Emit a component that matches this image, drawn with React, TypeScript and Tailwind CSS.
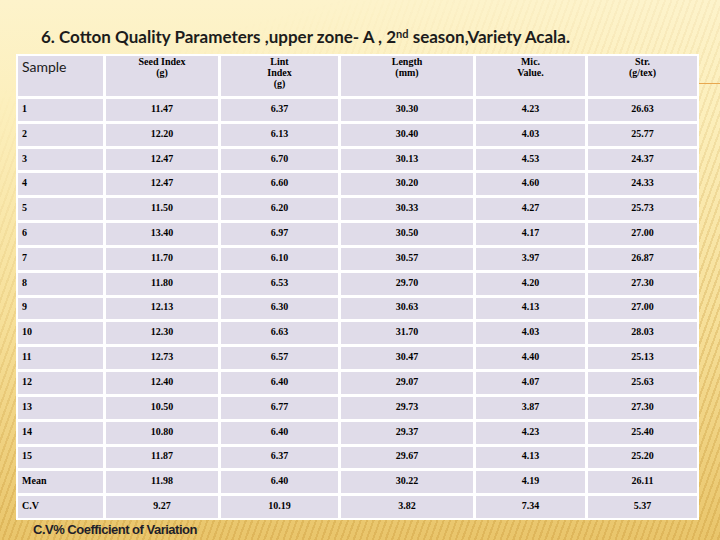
import React from 'react';

type Row = [string, string, string, string, string, string];

const rows: Row[] = [
  ['1', '11.47', '6.37', '30.30', '4.23', '26.63'],
  ['2', '12.20', '6.13', '30.40', '4.03', '25.77'],
  ['3', '12.47', '6.70', '30.13', '4.53', '24.37'],
  ['4', '12.47', '6.60', '30.20', '4.60', '24.33'],
  ['5', '11.50', '6.20', '30.33', '4.27', '25.73'],
  ['6', '13.40', '6.97', '30.50', '4.17', '27.00'],
  ['7', '11.70', '6.10', '30.57', '3.97', '26.87'],
  ['8', '11.80', '6.53', '29.70', '4.20', '27.30'],
  ['9', '12.13', '6.30', '30.63', '4.13', '27.00'],
  ['10', '12.30', '6.63', '31.70', '4.03', '28.03'],
  ['11', '12.73', '6.57', '30.47', '4.40', '25.13'],
  ['12', '12.40', '6.40', '29.07', '4.07', '25.63'],
  ['13', '10.50', '6.77', '29.73', '3.87', '27.30'],
  ['14', '10.80', '6.40', '29.37', '4.23', '25.40'],
  ['15', '11.87', '6.37', '29.67', '4.13', '25.20'],
  ['Mean', '11.98', '6.40', '30.22', '4.19', '26.11'],
  ['C.V', '9.27', '10.19', '3.82', '7.34', '5.37'],
];

const headers: string[][] = [
  ['Seed Index', '(g)'],
  ['Lint', 'Index', '(g)'],
  ['Length', '(mm)'],
  ['Mic.', 'Value.'],
  ['Str.', '(g/tex)'],
];

const serif = "font-['Liberation_Serif',serif]";

function HeaderCell({ lines }: { lines: string[] }) {
  return (
    <div className={`bg-[#e0dce9] text-center text-[10px] leading-[11px] font-bold text-black ${serif}`}>
      {lines.map((l) => (
        <div key={l}>{l}</div>
      ))}
    </div>
  );
}

export default function App() {
  return (
    <div className="relative w-[720px] h-[540px] overflow-hidden bg-[linear-gradient(180deg,#fdf3cb_0%,#fcefbc_20%,#f6df98_60%,#e9c56b_100%)]">
      {/* diagonal stripes */}
      <div className="absolute inset-0 bg-[repeating-linear-gradient(110deg,rgba(185,130,30,0.22)_0px,rgba(185,130,30,0.22)_2px,transparent_2px,transparent_6px)] [mask-image:linear-gradient(165deg,transparent_12%,black_70%)]" />
      <div className="absolute left-[699px] top-[83px] w-[21px] h-px bg-[#e8a850]" />

      <div className="relative">
        <h1 className="pl-[41px] pt-[26px] h-[54px] text-[17px] leading-[22px] font-bold text-[#1c1c1c] font-['Lato','Open_Sans',sans-serif]">
          6. Cotton Quality Parameters ,upper zone- A , 2<sup className="text-[11px]">nd</sup> season,Variety Acala.
        </h1>

        <div className="ml-[16px] w-[683px] h-[466px] bg-white p-[2px] grid gap-[3px] grid-cols-[85px_112px_117px_132px_109px_109px] grid-rows-[40px_repeat(17,1fr)]">
          <div className="bg-[#e0dce9] pl-[4px] pt-[2px] text-[14px] leading-[18px] text-[#1a1a1a] font-['Lato','Open_Sans',sans-serif]">
            Sample
          </div>
          {headers.map((h) => (
            <HeaderCell key={h.join('-')} lines={h} />
          ))}

          {rows.map((r) =>
            r.map((v, i) => (
              <div
                key={`${r[0]}-${i}`}
                className={`bg-[#e0dce9] flex items-center pb-[3px] text-[10px] font-bold text-black ${serif} ${
                  i === 0 ? 'pl-[4px]' : 'justify-center'
                }`}
              >
                {v}
              </div>
            ))
          )}
        </div>

        <div className="pl-[33px] pt-[1px] text-[13px] leading-[18px] font-bold text-[#1f1f2a] font-['Liberation_Sans',sans-serif] tracking-[-0.5px]">
          C.V% Coefficient of Variation
        </div>
      </div>
    </div>
  );
}
